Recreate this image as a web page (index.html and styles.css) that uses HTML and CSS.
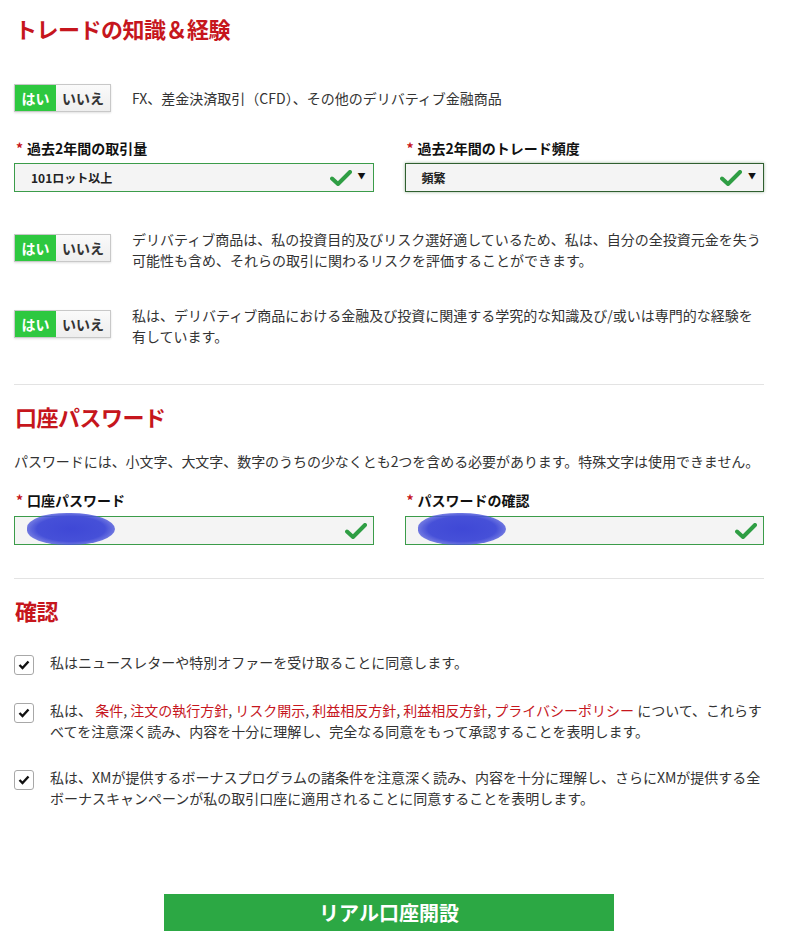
FILE: index.html
```html
<!DOCTYPE html>
<html lang="ja">
<head>
    <meta charset="UTF-8">
    <title>リアル口座開設</title>
    <link rel="stylesheet" href="styles.css">
</head>
<body>
    <div class="page">
        <h2 class="section-title first">トレードの知識＆経験</h2>

        <div class="toggle-row single">
            <div class="toggle"><span class="yes">はい</span><span class="no">いいえ</span></div>
            <p class="toggle-text">FX、差金決済取引（CFD）、その他のデリバティブ金融商品</p>
        </div>

        <div class="field-grid selects">
            <div class="field">
                <label class="field-label"><span class="req">*</span>過去2年間の取引量</label>
                <div class="select-box">
                    <span class="value">101ロット以上</span>
                    <svg class="tick" viewBox="0 0 22 16" width="22" height="16"><path d="M2 8.5 L8 14 L20 2" fill="none" stroke="#2f9e44" stroke-width="4" stroke-linecap="round" stroke-linejoin="round"/></svg>
                    <span class="caret">▼</span>
                </div>
            </div>
            <div class="field">
                <label class="field-label"><span class="req">*</span>過去2年間のトレード頻度</label>
                <div class="select-box focused">
                    <span class="value">頻繁</span>
                    <svg class="tick" viewBox="0 0 22 16" width="22" height="16"><path d="M2 8.5 L8 14 L20 2" fill="none" stroke="#2f9e44" stroke-width="4" stroke-linecap="round" stroke-linejoin="round"/></svg>
                    <span class="caret">▼</span>
                </div>
            </div>
        </div>

        <div class="toggle-row second">
            <div class="toggle"><span class="yes">はい</span><span class="no">いいえ</span></div>
            <p class="toggle-text">デリバティブ商品は、私の投資目的及びリスク選好適しているため、私は、自分の全投資元金を失う可能性も含め、それらの取引に関わるリスクを評価することができます。</p>
        </div>

        <div class="toggle-row third">
            <div class="toggle"><span class="yes">はい</span><span class="no">いいえ</span></div>
            <p class="toggle-text">私は、デリバティブ商品における金融及び投資に関連する学究的な知識及び/或いは専門的な経験を有しています。</p>
        </div>

        <hr class="divider first-divider">

        <h2 class="section-title">口座パスワード</h2>
        <p class="hint">パスワードには、小文字、大文字、数字のうちの少なくとも2つを含める必要があります。特殊文字は使用できません。</p>

        <div class="field-grid passwords">
            <div class="field">
                <label class="field-label"><span class="req">*</span>口座パスワード</label>
                <div class="input-box">
                    <span class="scribble"></span>
                    <svg class="tick" viewBox="0 0 22 16" width="22" height="16"><path d="M2 8.5 L8 14 L20 2" fill="none" stroke="#2f9e44" stroke-width="4" stroke-linecap="round" stroke-linejoin="round"/></svg>
                </div>
            </div>
            <div class="field">
                <label class="field-label"><span class="req">*</span>パスワードの確認</label>
                <div class="input-box">
                    <span class="scribble"></span>
                    <svg class="tick" viewBox="0 0 22 16" width="22" height="16"><path d="M2 8.5 L8 14 L20 2" fill="none" stroke="#2f9e44" stroke-width="4" stroke-linecap="round" stroke-linejoin="round"/></svg>
                </div>
            </div>
        </div>

        <hr class="divider second-divider">

        <h2 class="section-title">確認</h2>

        <div class="check-row">
            <span class="checkbox"><svg viewBox="0 0 12 10" width="12" height="10"><path d="M1.5 5 L4.5 8 L10.5 1.5" fill="none" stroke="#111" stroke-width="2.4"/></svg></span>
            <p class="check-text">私はニュースレターや特別オファーを受け取ることに同意します。</p>
        </div>

        <div class="check-row">
            <span class="checkbox"><svg viewBox="0 0 12 10" width="12" height="10"><path d="M1.5 5 L4.5 8 L10.5 1.5" fill="none" stroke="#111" stroke-width="2.4"/></svg></span>
            <p class="check-text">私は、 <a href="#">条件</a>, <a href="#">注文の執行方針</a>, <a href="#">リスク開示</a>, <a href="#">利益相反方針</a>, <a href="#">利益相反方針</a>, <a href="#">プライバシーポリシー</a> について、これらすべてを注意深く読み、内容を十分に理解し、完全なる同意をもって承認することを表明します。</p>
        </div>

        <div class="check-row">
            <span class="checkbox"><svg viewBox="0 0 12 10" width="12" height="10"><path d="M1.5 5 L4.5 8 L10.5 1.5" fill="none" stroke="#111" stroke-width="2.4"/></svg></span>
            <p class="check-text">私は、XMが提供するボーナスプログラムの諸条件を注意深く読み、内容を十分に理解し、さらにXMが提供する全ボーナスキャンペーンが私の取引口座に適用されることに同意することを表明します。</p>
        </div>

        <div class="submit-wrap">
            <button class="submit-btn">リアル口座開設</button>
        </div>
    </div>
</body>
</html>
```

FILE: styles.css
```css
* {
    margin: 0;
    padding: 0;
    box-sizing: border-box;
}

body {
    font-family: "Noto Sans CJK JP", "Noto Sans", sans-serif;
    background: #fff;
    color: #333;
    font-size: 14px;
}

.page {
    width: 804px;
    padding: 0 40px 0 14px;
}

.section-title {
    color: #c6161d;
    font-size: 22px;
    font-weight: bold;
    line-height: 30px;
    margin-top: 16px;
    padding-left: 1px;
    letter-spacing: -0.5px;
}

.section-title.first {
    margin-top: 0;
    padding-top: 13px;
}

/* はい / いいえ toggles */
.toggle-row {
    display: flex;
    align-items: flex-start;
    gap: 21px;
}

.toggle-row.single {
    align-items: center;
    margin-top: 41px;
}

.toggle-row.second {
    margin-top: 37px;
}

.toggle-row.third {
    margin-top: 34px;
}

.toggle {
    flex: 0 0 auto;
    display: flex;
    height: 28px;
    border: 1px solid #c8c8c8;
    box-shadow: 0 1px 2px rgba(0,0,0,0.12);
    font-size: 14px;
    font-weight: bold;
    line-height: 26px;
}

.toggle-row.second .toggle,
.toggle-row.third .toggle {
    margin-top: 5px;
}

.toggle .yes {
    width: 41px;
    text-align: center;
    background: #2ec840;
    color: #fff;
}

.toggle .no {
    width: 54px;
    text-align: center;
    background: linear-gradient(#fafafa, #eeeeee);
    color: #333;
}

.toggle-text {
    line-height: 21px;
    color: #333;
}

/* fields */
.field-grid {
    display: grid;
    grid-template-columns: 1fr 1fr;
    column-gap: 31px;
}

.field-grid.selects {
    margin-top: 26px;
}

.field-grid.passwords {
    margin-top: 18px;
}

.field-label {
    display: block;
    font-size: 14px;
    font-weight: bold;
    line-height: 20px;
    color: #111;
    margin-bottom: 5px;
}

.passwords .field-label {
    margin-bottom: 6px;
}

.req {
    color: #c6161d;
    margin: 0 4px 0 2px;
}

.select-box,
.input-box {
    position: relative;
    display: flex;
    align-items: center;
    height: 29px;
    border: 1px solid #3b9c4a;
    background: #f4f4f4;
}

.select-box.focused {
    border-color: #2f5f2f;
    box-shadow: 0 0 3px rgba(30, 90, 30, 0.45);
}

.select-box .value {
    flex: 1;
    padding-left: 16px;
    font-size: 12px;
    font-weight: bold;
    color: #222;
}

.select-box .tick {
    margin-right: 6px;
}

.caret {
    font-size: 8px;
    color: #111;
    margin-right: 7px;
    margin-top: -4px;
}

.input-box {
    justify-content: flex-end;
}

.input-box .tick {
    margin-right: 6px;
}

/* redacted password value */
.scribble {
    position: absolute;
    left: 12px;
    top: -4px;
    width: 88px;
    height: 32px;
    border-radius: 45% 50% 50% 45%;
    background: radial-gradient(ellipse at center, #3f48d6 0%, #4650d8 55%, rgba(80, 90, 220, 0.75) 75%, rgba(120, 130, 230, 0) 100%);
    filter: blur(0.6px);
}

.hint {
    margin-top: 20px;
    line-height: 21px;
    color: #333;
    letter-spacing: -0.05px;
}

.divider {
    border: none;
    border-top: 1px solid #e3e3e3;
}

.first-divider {
    margin-top: 37px;
}

.second-divider {
    margin-top: 33px;
}

/* 確認 */
.check-row {
    display: flex;
    align-items: flex-start;
    gap: 16px;
    margin-top: 25px;
}

.section-title + .check-row {
    margin-top: 27px;
}

.checkbox {
    flex: 0 0 auto;
    width: 20px;
    height: 20px;
    margin-top: 3px;
    border: 1px solid #a8a8a8;
    border-radius: 3px;
    background: #fff;
    display: flex;
    align-items: center;
    justify-content: center;
}

.check-text {
    line-height: 21px;
    color: #333;
}

.check-text a {
    color: #c6161d;
    text-decoration: none;
}

.submit-wrap {
    display: flex;
    justify-content: center;
    margin-top: 85px;
    padding-bottom: 19px;
}

.submit-btn {
    width: 450px;
    height: 37px;
    border: none;
    background: #2ca844;
    color: #fff;
    font-family: "Noto Sans CJK JP", sans-serif;
    font-size: 20px;
    font-weight: bold;
    cursor: pointer;
}
```
